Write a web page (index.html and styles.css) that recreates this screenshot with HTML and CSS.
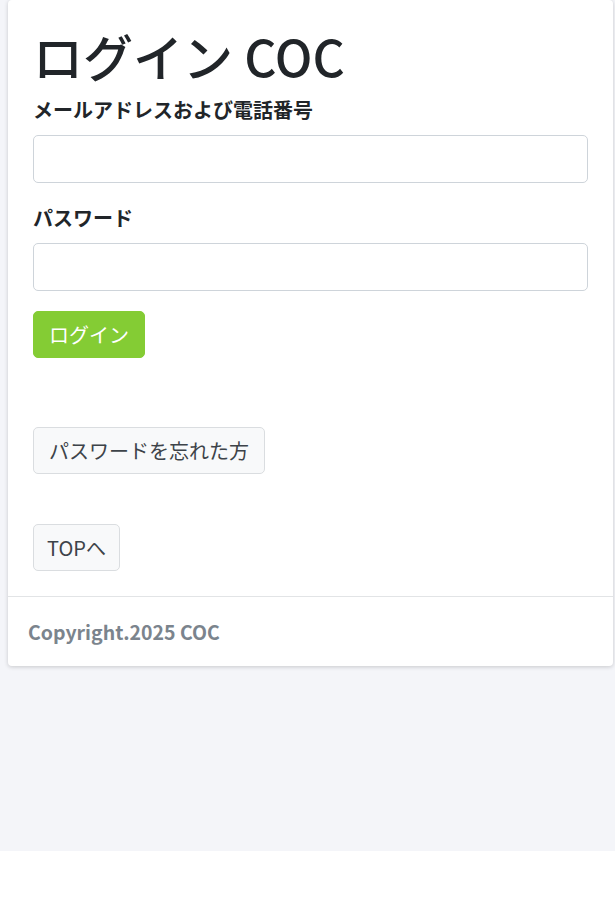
FILE: index.html
```html
<!DOCTYPE html>
<html lang="ja">
<head>
    <meta charset="UTF-8">
    <meta name="viewport" content="width=device-width, initial-scale=1.0">
    <title>ログイン COC</title>
    <link rel="stylesheet" href="styles.css">
</head>
<body>
    <div class="page">
        <div class="card">
            <div class="card-body">
                <h1>ログイン COC</h1>
                <form>
                    <div class="form-group">
                        <label for="email">メールアドレスおよび電話番号</label>
                        <input type="text" id="email" class="form-control">
                    </div>
                    <div class="form-group">
                        <label for="password">パスワード</label>
                        <input type="password" id="password" class="form-control">
                    </div>
                    <button type="button" class="btn btn-green">ログイン</button>
                </form>
                <div class="links">
                    <a href="#" class="btn btn-light forgot">パスワードを忘れた方</a>
                    <a href="#" class="btn btn-light top">TOPへ</a>
                </div>
            </div>
            <div class="card-footer">Copyright.2025 COC</div>
        </div>
    </div>
</body>
</html>
```

FILE: styles.css
```css
html{
    font-size: 20px;
}
body{
    margin: 0;
    background: #fff;
    font-family: "Noto Sans CJK JP", "Noto Sans", sans-serif;
    color: #212529;
    line-height: 1.5;
}
.page{
    min-height: 851px;
    background: #f4f5f9;
    display: flow-root;
}
.card{
    margin: 0 2px 0 8px;
    background: #fff;
    border-radius: 4px;
    box-shadow: 0 1px 4px rgba(0, 0, 0, 0.18);
}
.card-body{
    padding: 25px;
}
h1{
    margin: 0 0 10px;
    font-size: 50px;
    font-weight: 500;
    line-height: 1.2;
}
label{
    display: block;
    font-weight: 700;
    margin-bottom: 10px;
}
.form-group{
    margin-bottom: 20px;
}
.form-control{
    display: block;
    box-sizing: border-box;
    width: 100%;
    height: 48px;
    border: 1px solid #ced4da;
    border-radius: 5px;
    font-size: 20px;
    padding: 7px 15px;
}
.btn{
    display: inline-block;
    box-sizing: border-box;
    height: 47px;
    padding: 7.5px 15px;
    border: 1px solid transparent;
    border-radius: 5px;
    font-family: inherit;
    font-size: 20px;
    line-height: 30px;
    text-decoration: none;
}
.btn-green{
    background: #84cc34;
    border-color: #84cc34;
    color: #fff;
}
.btn-light{
    background: #f8f9fa;
    border-color: #dadde0;
    color: #3d4349;
}
.links{
    display: flex;
    flex-direction: column;
    align-items: flex-start;
}
.forgot{
    margin-top: 69px;
}
.top{
    margin-top: 50px;
}
.top{
    padding: 7.5px 13px;
}
.card-footer{
    border-top: 1px solid #e2e4e6;
    padding: 20px;
    color: #7b848d;
    font-weight: 700;
    font-size: 19.5px;
}
```
